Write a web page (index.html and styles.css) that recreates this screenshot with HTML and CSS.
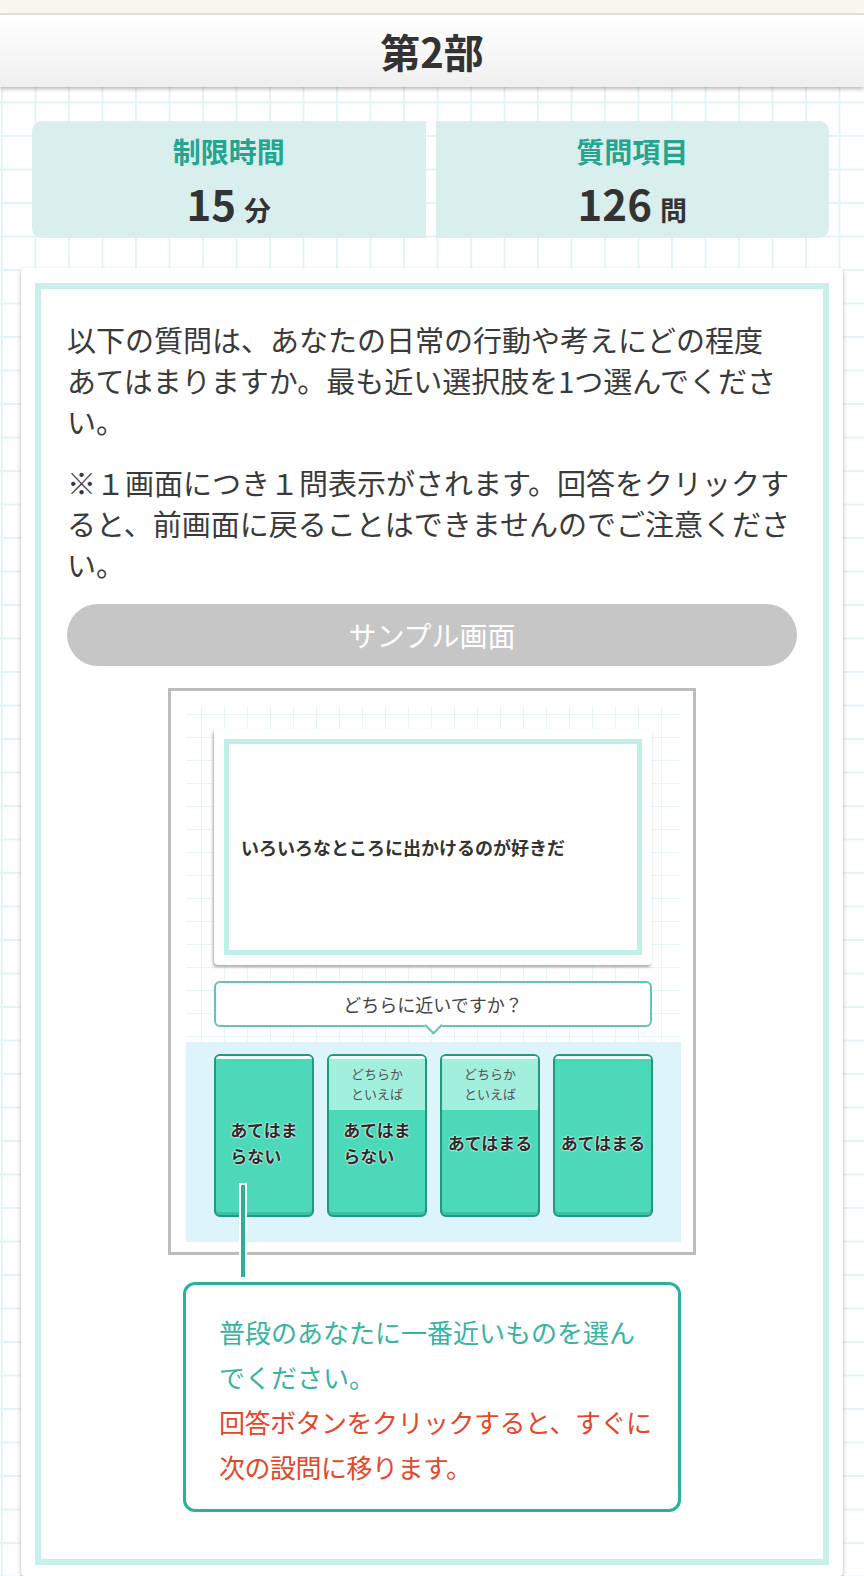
FILE: index.html
```html
<!DOCTYPE html>
<html lang="ja">
<head>
<meta charset="utf-8">
<title>第2部</title>
<link rel="stylesheet" href="styles.css">
</head>
<body>
<div class="topstrip"></div>
<header class="header"><h1 class="title">第2部</h1></header>
<main class="page">
  <div class="info">
    <div class="info-box info-left">
      <div class="info-label">制限時間</div>
      <div class="info-value"><span class="num">15</span><span class="unit">分</span></div>
    </div>
    <div class="info-box info-right">
      <div class="info-label">質問項目</div>
      <div class="info-value"><span class="num">126</span><span class="unit">問</span></div>
    </div>
  </div>

  <section class="card">
    <div class="card-inner">
      <p class="lead">以下の質問は、あなたの日常の行動や考えにどの程度<br>あてはまりますか。最も近い選択肢を1つ選んでください。</p>
      <p class="lead">※１画面につき１問表示がされます。回答をクリックすると、前画面に戻ることはできませんのでご注意ください。</p>
      <div class="sample-bar">サンプル画面</div>

      <div class="sample">
        <div class="frame">
          <div class="screen">
            <div class="q-card"><div class="q-inner">いろいろなところに出かけるのが好きだ</div></div>
            <div class="bubble">どちらに近いですか？</div>
          </div>
          <div class="answers">
            <div class="btn">
              <div class="btn-top"></div>
              <div class="btn-main"><span>あてはま<br>らない</span></div>
            </div>
            <div class="btn">
              <div class="btn-top btn-top-soft">どちらか<br>といえば</div>
              <div class="btn-main"><span>あてはま<br>らない</span></div>
            </div>
            <div class="btn">
              <div class="btn-top btn-top-soft">どちらか<br>といえば</div>
              <div class="btn-main"><span>あてはまる</span></div>
            </div>
            <div class="btn">
              <div class="btn-top"></div>
              <div class="btn-main"><span>あてはまる</span></div>
            </div>
          </div>
        </div>
        <div class="connector"></div>
        <div class="callout">
          <p class="callout-green">普段のあなたに一番近いものを選ん<br>でください。</p>
          <p class="callout-red">回答ボタンをクリックすると、すぐに<br>次の設問に移ります。</p>
        </div>
      </div>
    </div>
  </section>
</main>
</body>
</html>
```

FILE: styles.css
```css
* { box-sizing: border-box; }

html, body {
  margin: 0;
  padding: 0;
}

body {
  width: 864px;
  min-height: 1576px;
  font-family: "Noto Sans CJK JP", "Noto Sans", sans-serif;
  color: #3a3a3a;
  background-color: #fff;
  background-image:
    linear-gradient(#e3f4f8 2px, transparent 2px),
    linear-gradient(90deg, #e3f4f8 2px, transparent 2px);
  background-size: 33.5px 33.5px;
  background-position: 1px 1px;
}

.topstrip {
  height: 15px;
  background: #f8f7ef;
  border-bottom: 2px solid #e6e4d6;
}

.header {
  position: relative;
  height: 72px;
  background: linear-gradient(#ffffff, #efefef);
  box-shadow: 0 2px 4px rgba(0, 0, 0, 0.28);
  text-align: center;
}

.title {
  margin: 0;
  font-size: 40px;
  line-height: 72px;
  font-weight: 700;
  color: #333;
}

.page {
  padding-top: 34px;
  padding-bottom: 10px;
}

.info {
  display: flex;
  gap: 10px;
  margin: 0 35px 0 32px;
}

.info-box {
  flex: 1;
  height: 117px;
  background: #d8efed;
  padding-top: 12px;
  text-align: center;
}

.info-left { border-radius: 10px 0 0 10px; }
.info-right { border-radius: 0 10px 10px 0; }

.info-label {
  font-size: 28px;
  line-height: 36px;
  font-weight: 700;
  color: #25a58f;
}

.info-value {
  margin-top: 9px;
  line-height: 50px;
  font-weight: 700;
  color: #333;
}

.num {
  font-size: 42px;
}

.unit {
  font-size: 27px;
  margin-left: 8px;
}

.card {
  margin: 30px 21px 0 21px;
  background: #fff;
  padding: 15px 14px 11px 14px;
  border-radius: 4px;
  box-shadow: 0 2px 4px rgba(0, 0, 0, 0.3);
}

.card-inner {
  border: 6px solid #c9efea;
  padding: 30px 26px 47px 26px;
}

.lead {
  margin: 0 0 20px 0;
  font-size: 29px;
  line-height: 41px;
  color: #3a3a3a;
}

.lead + .lead { margin-bottom: 0; }

.sample-bar {
  margin-top: 19px;
  height: 62px;
  border-radius: 31px;
  background: #c6c6c6;
  color: #fff;
  font-size: 28px;
  line-height: 62px;
  text-align: center;
}

.sample {
  position: relative;
  margin-top: 22px;
  display: flex;
  flex-direction: column;
  align-items: center;
}

.frame {
  width: 528px;
  border: 3px solid #bcbcbc;
  background: #fff;
  padding: 15px 12px 10px 15px;
}

.screen {
  background-color: #fff;
  background-image:
    linear-gradient(#e6f5fa 1px, transparent 1px),
    linear-gradient(90deg, #e6f5fa 1px, transparent 1px);
  background-size: 23px 23px;
  background-position: 15px 8px;
  padding: 23px 29px 15px 28px;
}

.q-card {
  height: 236px;
  background: #fff;
  padding: 10px;
  border-radius: 2px 2px 4px 4px;
  box-shadow: -1px 2px 3px rgba(0, 0, 0, 0.35);
}

.q-inner {
  height: 100%;
  border: 5px solid #bff0e8;
  display: flex;
  align-items: center;
  padding-left: 12px;
  font-size: 18px;
  font-weight: 700;
  color: #333;
}

.bubble {
  position: relative;
  margin-top: 16px;
  height: 46px;
  border: 2px solid #5fc6b5;
  border-radius: 6px;
  background: #fff;
  text-align: center;
  font-size: 18px;
  line-height: 42px;
  color: #444;
}

.bubble::after {
  content: "";
  position: absolute;
  left: 50%;
  bottom: -7px;
  width: 11px;
  height: 11px;
  margin-left: -6px;
  background: #fff;
  border-right: 2px solid #5fc6b5;
  border-bottom: 2px solid #5fc6b5;
  transform: rotate(45deg);
}

.answers {
  height: 200px;
  background: #ddf4fb;
  padding: 12px 28px 25px 28px;
  display: flex;
  gap: 13px;
}

.btn {
  flex: 1;
  height: 163px;
  border: 2px solid #23987f;
  border-radius: 6px;
  background: #4cd9b9;
  overflow: hidden;
  box-shadow: inset 0 -3px 0 #3cc2a4;
}

.btn-top {
  height: 54px;
  border-top: 3px solid #f2fffb;
  padding-top: 5px;
  text-align: center;
  font-size: 13px;
  line-height: 20px;
  color: #555;
}

.btn-top-soft {
  background: #a3efdd;
}

.btn-main {
  height: 66px;
  display: flex;
  align-items: center;
  justify-content: center;
}

.btn-main span {
  display: inline-block;
  white-space: nowrap;
  text-align: left;
  font-size: 17px;
  line-height: 26px;
  font-weight: 700;
  color: #2b2b2b;
  text-shadow: 0 0 2px #fff, 0 0 2px #fff;
}

.connector {
  position: absolute;
  left: 174px;
  top: 497px;
  width: 4px;
  height: 92px;
  background: #27b19b;
  box-shadow: 0 0 0 2px #fff;
}

.callout {
  margin-top: 27px;
  width: 498px;
  border: 3px solid #28b29c;
  border-radius: 12px;
  background: #fff;
  padding: 24px 10px 20px 33px;
  font-size: 26px;
  line-height: 45px;
}

.callout p {
  margin: 0;
  white-space: nowrap;
}

.callout-green { color: #38b39f; }

.callout-red {
  color: #e2482a;
  letter-spacing: -0.5px;
}
```
